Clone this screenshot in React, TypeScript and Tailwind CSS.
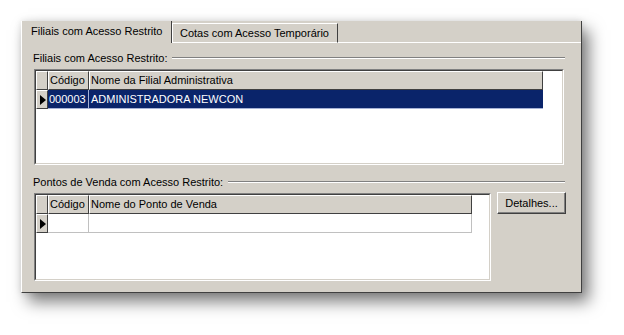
import React from "react";

const font = { fontFamily: '"Liberation Sans", Arial, sans-serif' };

function Tri() {
  return (
    <svg width="6" height="10" viewBox="0 0 6 10" className="block">
      <polygon points="0,0 6,5 0,10" fill="#000" />
    </svg>
  );
}

function HeaderCell({ w, children, grow }: { w?: string; children?: React.ReactNode; grow?: boolean }) {
  return (
    <div
      className={`${w ?? ""} ${grow ? "flex-1" : ""} h-full bg-[#d4d0c8] border-t border-l border-t-white border-l-white border-r border-b border-r-[#404040] border-b-[#404040] pl-[1px] leading-[17px] text-[11px] text-black whitespace-nowrap overflow-hidden`}
    >
      {children}
    </div>
  );
}

function Grid({
  width,
  height,
  headerWidth,
  col2,
  row,
}: {
  width: string;
  height: string;
  headerWidth: string;
  col2: string;
  row: { code: string; name: string; selected: boolean };
}) {
  return (
    <div className={`${width} ${height} border border-t-[#808080] border-l-[#808080] border-r-white border-b-white`}>
      <div className="w-full h-full border border-t-[#404040] border-l-[#404040] border-r-[#d4d0c8] border-b-[#d4d0c8] bg-white overflow-hidden">
        <div className={`${headerWidth} h-[19px] flex`}>
          <HeaderCell w="w-[12px]" />
          <HeaderCell w="w-[41px]">Código</HeaderCell>
          <HeaderCell grow>{col2}</HeaderCell>
        </div>
        <div className={`${headerWidth} h-[19px] flex`}>
          <div className="w-[12px] h-full bg-[#d4d0c8] border-t border-l border-t-white border-l-white border-r border-b border-r-[#404040] border-b-[#404040] flex items-center justify-center pl-[1px]">
            <Tri />
          </div>
          {row.selected ? (
            <>
              <div className="w-[41px] h-full bg-[#0a246a] border-r border-b border-r-[#a6b2d6] border-b-[#a6b2d6] pl-[1px] leading-[18px] text-[11px] text-white">
                {row.code}
              </div>
              <div className="flex-1 h-full bg-[#0a246a] border-b border-b-[#a6b2d6] pl-[2px] leading-[18px] text-[11px] text-white">
                {row.name}
              </div>
            </>
          ) : (
            <>
              <div className="w-[41px] h-full bg-white border-r border-b border-r-[#c0c0c0] border-b-[#c0c0c0]" />
              <div className="flex-1 h-full bg-white border-r border-b border-r-[#c0c0c0] border-b-[#c0c0c0]" />
            </>
          )}
        </div>
      </div>
    </div>
  );
}

function GroupLabel({ text, right }: { text: string; right: string }) {
  return (
    <div className={`flex items-center h-[14px] ${right}`}>
      <span className="text-[11px] leading-[14px] text-black whitespace-nowrap pr-[5px]">{text}</span>
      <div className="flex-1 h-[2px] border-t border-t-[#808080] border-b border-b-white" />
    </div>
  );
}

export default function App() {
  return (
    <div className="w-[624px] h-[335px] bg-white pt-[21px] pl-[21px]" style={font}>
      <div className="w-[561px] h-[272px] bg-[#d4d0c8] border-l border-l-white border-r border-r-[#404040] border-b border-b-[#404040] shadow-[7px_9px_15px_rgba(0,0,0,0.5),0_0_7px_rgba(0,0,0,0.12)] flex flex-col">
        {/* tab strip */}
        <div className="h-[22px] flex shrink-0">
          <div className="w-[150px] h-full border-r border-r-[#404040] pl-[9px] pt-[4px] text-[11px] leading-[13px] text-black whitespace-nowrap">
            Filiais com Acesso Restrito
          </div>
          <div className="w-[166px] h-[20px] mt-[2px] border-l border-l-white border-t border-t-white border-r border-r-[#404040] border-b border-b-white pl-[7px] pt-[3px] text-[11px] leading-[13px] text-black whitespace-nowrap">
            Cotas com Acesso Temporário
          </div>
          <div className="flex-1 self-end h-[1px] bg-white" />
        </div>
        {/* sheet */}
        <div className="flex-1 pl-[11px] pt-[8px] flex flex-col">
          <GroupLabel text="Filiais com Acesso Restrito:" right="mr-[16px]" />
          <div className="mt-[4px] pl-[1px]">
            <Grid
              width="w-[530px]"
              height="h-[96px]"
              headerWidth="w-[507px]"
              col2="Nome da Filial Administrativa"
              row={{ code: "000003", name: "ADMINISTRADORA NEWCON", selected: true }}
            />
          </div>
          <div className="mt-[10px]">
            <GroupLabel text="Pontos de Venda com Acesso Restrito:" right="mr-[16px]" />
          </div>
          <div className="mt-[4px] pl-[1px] flex items-start">
            <Grid
              width="w-[457px]"
              height="h-[88px]"
              headerWidth="w-[436px]"
              col2="Nome do Ponto de Venda"
              row={{ code: "", name: "", selected: false }}
            />
            <button className="ml-[6px] -mt-[1px] w-[69px] h-[22px] bg-[#d4d0c8] border border-t-white border-l-white border-r-[#404040] border-b-[#404040] text-[11px] text-black leading-[18px] shadow-[inset_-1px_-1px_0_#808080]">
              Detalhes...
            </button>
          </div>
        </div>
      </div>
    </div>
  );
}
